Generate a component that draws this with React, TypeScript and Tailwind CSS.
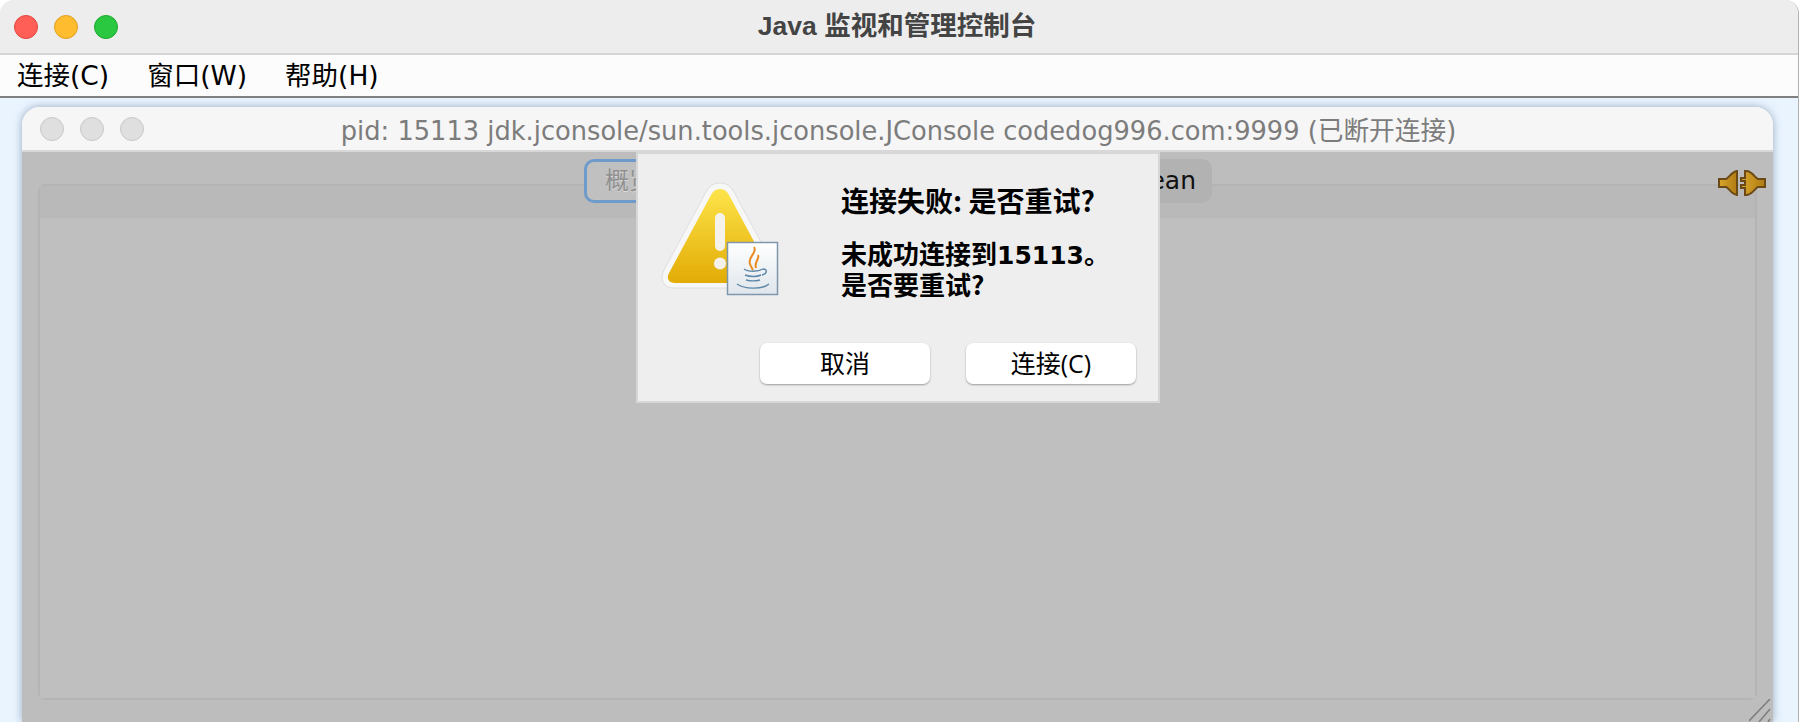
const CJK = "font-['DejaVu_Sans','Noto_Sans_CJK_SC',sans-serif]";

function Dot({ color }: { color: string }) {
  return <span className={`h-[24px] w-[24px] rounded-full border ${color}`} />;
}

function WarningIcon() {
  return (
    <svg width="120" height="116" viewBox="0 0 120 116">
      <defs>
        <linearGradient id="warnFill" x1="0" y1="0" x2="0" y2="1">
          <stop offset="0" stopColor="#fde44a" />
          <stop offset="1" stopColor="#e2ab05" />
        </linearGradient>
        <linearGradient id="docFill" x1="0" y1="0" x2="0" y2="1">
          <stop offset="0" stopColor="#ffffff" />
          <stop offset="1" stopColor="#dfe6ec" />
        </linearGradient>
      </defs>
      <path d="M60 3 C66 3 71 6 74 12 L116 90 C121 100 116 108 106 108 L14 108 C4 108 -1 100 4 90 L46 12 C49 6 54 3 60 3 Z" fill="#f7f7f7" stroke="#dedede" strokeWidth="1" />
      <path d="M60 9 C64 9 67 11 69 15 L111 93 C114 99 111 103 105 103 L15 103 C9 103 6 99 9 93 L51 15 C53 11 56 9 60 9 Z" fill="url(#warnFill)" />
      <rect x="55" y="33" width="10" height="38" rx="5" fill="#f4f2ea" />
      <circle cx="60" cy="83.5" r="6" fill="#f4f2ea" />
      <rect x="67.5" y="62.5" width="50" height="52" fill="url(#docFill)" stroke="#7f97ad" strokeWidth="1.5" />
      <path d="M94 67 C98 73 87 77 90 84 C91 87 92 88 93 90 M98 75 C100 79 94 81 96 88" fill="none" stroke="#e98a1e" strokeWidth="2" />
      <path d="M84 89 C88 92 98 92 103 89 C108 89 107 94 102 95 M85 95 C90 97 97 97 101 95 M86 100 C90 101 96 101 100 100 M77 104 C84 109 102 110 109 104" fill="none" stroke="#5c87a8" strokeWidth="1.4" />
    </svg>
  );
}

function PlugIcon() {
  return (
    <svg width="48" height="26" viewBox="0 0 48 26">
      <defs>
        <linearGradient id="plugFill" x1="0" y1="0" x2="1" y2="0">
          <stop offset="0" stopColor="#d8a52a" />
          <stop offset="1" stopColor="#b07c14" />
        </linearGradient>
      </defs>
      <path d="M1 9 H8 C11 8 13 2 19 1 V25 C13 24 11 18 8 17 H1 Z" fill="url(#plugFill)" stroke="#6b4a17" strokeWidth="2" />
      <path d="M47 9 H40 C37 8 35 2 29 1 H27 V8 H23 V11 H27 V15 H23 V18 H27 V25 H29 C35 24 37 18 40 17 H47 Z" fill="url(#plugFill)" stroke="#6b4a17" strokeWidth="2" />
    </svg>
  );
}

function Grip() {
  return (
    <svg width="22" height="23" viewBox="0 0 22 23">
      <path d="M0 22 L21 0 M10 23 L21 10 M19 23 L21 20" stroke="#7f7f7f" strokeWidth="1.6" fill="none" />
    </svg>
  );
}

function DialogButton({ label }: { label: string }) {
  return (
    <button className="flex h-[41px] w-[170px] items-center justify-center rounded-[7px] bg-white font-['Open_Sans','Noto_Sans_CJK_SC',sans-serif] text-[25px] text-black shadow-[0_1px_2px_rgba(0,0,0,0.35)]">
      {label}
    </button>
  );
}

export default function App() {
  return (
    <div className="h-[722px] w-[1800px] overflow-hidden bg-white">
      <div className={`flex h-full w-[1799px] flex-col overflow-hidden rounded-t-[14px] border-r border-[#b0b0b0] bg-[#e9f4ff] ${CJK}`}>
        <div className="flex h-[55px] shrink-0 items-center border-b-2 border-[#d5d5d5] bg-[#ededed] pl-[14px]">
          <div className="flex gap-[16px]">
            <Dot color="border-[#e2463f] bg-[#ff5f57]" />
            <Dot color="border-[#dfa023] bg-[#febc2e]" />
            <Dot color="border-[#1fa72f] bg-[#2ac840]" />
          </div>
          <div className="flex-1 pr-[122px] text-center font-['Liberation_Sans','Noto_Sans_CJK_SC',sans-serif] text-[26.5px] font-bold text-[#444444]">Java 监视和管理控制台</div>
        </div>
        <div className="flex h-[43px] shrink-0 items-center gap-[38px] border-b-2 border-[#808080] bg-[#fcfcfc] pl-[17px] pt-[1px] text-[26.5px] text-black">
          <span>连接(C)</span>
          <span>窗口(W)</span>
          <span>帮助(H)</span>
        </div>
        <div className="flex min-h-0 flex-1 pl-[22px] pr-[25px] pt-[9px]">
          <div className="relative flex min-h-0 flex-1 flex-col rounded-t-[18px] shadow-[0_0_8px_rgba(100,120,145,0.6)]">
            <div className="flex h-[45px] shrink-0 items-center rounded-t-[18px] border-b-2 border-[#d8d8d8] bg-[#f6f6f6] pl-[18px]">
              <div className="flex gap-[16px]">
                <Dot color="border-[#c8c8c8] bg-[#dfdfdf]" />
                <Dot color="border-[#c8c8c8] bg-[#dfdfdf]" />
                <Dot color="border-[#c8c8c8] bg-[#dfdfdf]" />
              </div>
              <div className="flex-1 pr-[120px] pt-[6px] text-center text-[25.7px] text-[#7c7c7c]">
                pid: 15113 jdk.jconsole/sun.tools.jconsole.JConsole codedog996.com:9999 (已断开连接)
              </div>
            </div>
            <div className="relative min-h-0 flex-1 bg-[#bdbdbd] px-[16px] pb-[22px] pt-[32px]">
              <div className="flex h-full flex-col rounded-[8px] border-2 border-[#b4b4b4]">
                <div className="h-[32px] shrink-0 bg-[#b9b9b9]" />
                <div className="flex-1 bg-[#bfbfbf]" />
              </div>

              <div className="absolute left-[562px] top-[7px] flex h-[44px] w-[86px] items-center rounded-[10px] border-[3px] border-[#6f9bcb] bg-[#c0c0c0] pl-[18px] text-[24px] text-[#8f8f8f] [text-shadow:0_1px_0_#dcdcdc]">概览</div>
              <div className="absolute left-[1100px] top-[7px] flex h-[44px] w-[90px] items-center justify-end rounded-[10px] bg-[#b2b2b2] pr-[16px] text-[25px] text-[#111111]">Bean</div>
              <div className="absolute right-[7px] top-[18px]"><PlugIcon /></div>
              <div className="absolute bottom-0 right-[2px]"><Grip /></div>

              <div className="absolute left-[614px] top-0 flex h-[251px] w-[524px] flex-col border-2 border-[#d7d7d7] bg-[#eeeeee] pl-[22px]">
                <div className="flex">
                  <div className="mt-[26px] w-[181px]"><WarningIcon /></div>
                  <div className="pt-[28px] font-['Noto_Sans_CJK_SC',sans-serif] text-[26px] font-bold text-black">
                    <div className="text-[28px] leading-[36px]">连接失败: 是否重试?</div>
                    <div className="mt-[19px] leading-[31px]">
                      未成功连接到<span className="font-['DejaVu_Sans',sans-serif] text-[25px] leading-none">15113</span>。
                    </div>
                    <div className="leading-[31px]">是否要重试?</div>
                  </div>
                </div>
                <div className="mt-auto mb-[17px] flex justify-end gap-[36px] pr-[22px]">
                  <DialogButton label="取消" />
                  <DialogButton label="连接(C)" />
                </div>
              </div>
            </div>
          </div>
        </div>
      </div>
    </div>
  );
}
